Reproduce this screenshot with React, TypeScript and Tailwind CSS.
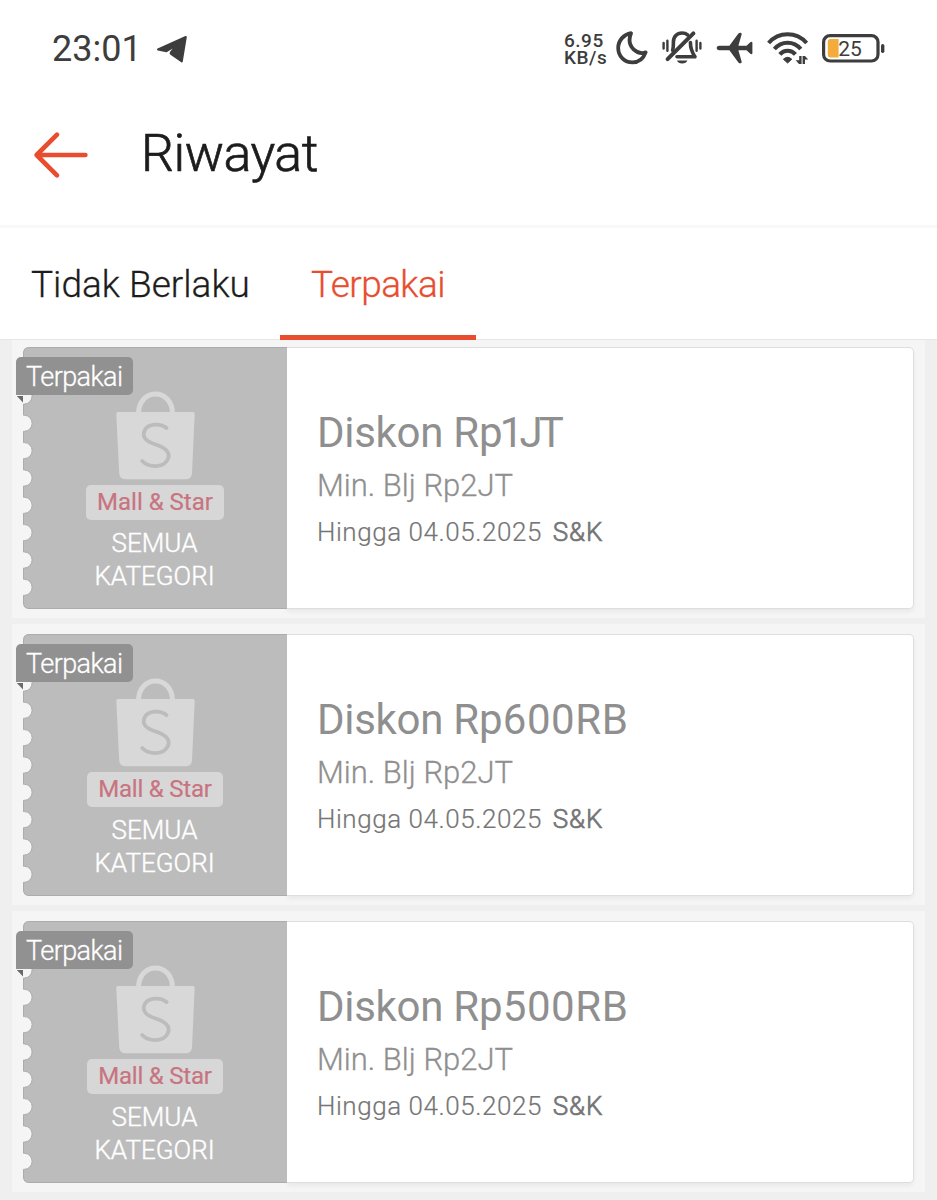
type Voucher = { amount: string; amountTracking: string; minimum: string; until: string; wide?: boolean };

const vouchers: Voucher[] = [
  { amount: "1JT", amountTracking: "tracking-[-3.8px] ml-[-3px]", minimum: "Min. Blj Rp2JT", until: "Hingga 04.05.2025", wide: true },
  { amount: "600RB", amountTracking: "tracking-[0.6px]", minimum: "Min. Blj Rp2JT", until: "Hingga 04.05.2025" },
  { amount: "500RB", amountTracking: "tracking-[0.6px]", minimum: "Min. Blj Rp2JT", until: "Hingga 04.05.2025" },
];

function TelegramIcon() {
  return (
    <svg width="32" height="28" viewBox="0 0 32 28" fill="#3d3d3d" stroke="#3d3d3d" strokeWidth="2" strokeLinejoin="round">
      <path d="M2 14.4 L29.8 2 L25.8 26.4 L15 19 Q14.2 18.2 15 17.2 L21.5 9.4 L10.5 16.2 Z" />
    </svg>
  );
}

function MoonIcon() {
  return (
    <svg width="32" height="34" viewBox="0 0 32 34" fill="none" stroke="#3d3d3d" strokeWidth="3.8" strokeLinecap="round" strokeLinejoin="round">
      <path d="M15 2.2 C8 3.4 2.2 9.2 2.2 17 C2.2 25.4 8.6 31.4 16.4 31.4 C22.4 31.4 27.4 27.6 29.6 21.4 C26 22.6 21.4 22 17.6 18.4 C13.4 14.2 12.4 8.6 15 2.2 Z" />
    </svg>
  );
}

function MutedBellIcon() {
  return (
    <svg width="40" height="36" viewBox="0 0 40 36" fill="none" stroke="#3d3d3d" strokeLinecap="round">
      <path d="M1.6 13V18.6M5.4 10.8V20.8M34.6 10.8V20.8M38.4 13V18.6" strokeWidth="2.4" />
      <path d="M10.6 20.4 C11.4 18 11.4 16 11.4 12 C11.4 6.4 15 3 20 3 C22.2 3 24.2 3.6 25.6 4.8" strokeWidth="3.6" />
      <path d="M28.4 12.6 C28.4 19 29.6 22 33 26.8 H15" strokeWidth="3.6" strokeLinejoin="round" />
      <path d="M5.6 29.2 L31.4 3.4" strokeWidth="4" />
      <path d="M15 30.6 H25.4 C24.4 34.6 16 34.6 15 30.6 Z" fill="#3d3d3d" stroke="none" />
    </svg>
  );
}

function PlaneIcon() {
  return (
    <svg width="37" height="32" viewBox="0 0 37 32" fill="#3d3d3d">
      <path d="M3 13.8 H13.4 L22.4 1.6 Q23.4 0.4 24.8 0.8 Q26 1.2 25.6 2.6 L22.4 13.8 H30.5 L34 10.4 Q36 9 36.4 10.8 V21.2 Q36 23 34 21.6 L30.5 18.2 H22.4 L25.6 29.4 Q26 30.8 24.8 31.2 Q23.4 31.6 22.4 30.4 L13.4 18.2 H3 Q0.6 18 0.6 16 Q0.6 14 3 13.8 Z" />
    </svg>
  );
}

function WifiIcon() {
  return (
    <svg width="42" height="33" viewBox="0 0 42 33" fill="none" stroke="#3d3d3d">
      <path d="M1.6 11 C11.8 -0.6 29.4 -0.6 39.6 11" strokeWidth="4" />
      <path d="M7.4 17 C14.4 8.6 26.8 8.6 33.8 17" strokeWidth="4" />
      <path d="M12.8 22.4 C17 17.4 24.2 17.4 28.4 22.4" strokeWidth="4" />
      <path d="M20.6 31 L16.4 27.2 Q20.6 23.4 24.8 27.2 Z" fill="#3d3d3d" strokeLinejoin="round" />
      <path d="M33.4 24V32M36.8 32V24" strokeWidth="2.4" />
      <path d="M33.4 32 H32 L28.6 28.2 H33.4 ZM36.8 24 H38 L41.2 27.6 H36.8 Z" fill="#3d3d3d" stroke="none" />
    </svg>
  );
}

function BatteryIcon() {
  return (
    <svg width="63" height="29" viewBox="0 0 63 29">
      <rect x="1.6" y="1.6" width="54.4" height="25.4" rx="6.5" fill="none" stroke="#3d3d3d" strokeWidth="3.2" />
      <path d="M8.5 5 H16.6 V23.5 H8.5 Q5.8 23.5 5.8 20.8 V7.7 Q5.8 5 8.5 5 Z" fill="#f3ab3c" />
      <rect x="59" y="10" width="3.4" height="9" rx="1.7" fill="#3d3d3d" />
      <text x="28" y="21.6" textAnchor="middle" fontFamily="Roboto, sans-serif" fontSize="21" fill="#3d3d3d" fontWeight="400">25</text>
    </svg>
  );
}

function BackIcon() {
  return (
    <svg width="56" height="48" viewBox="0 0 56 48" fill="none" stroke="#e84d2f" strokeWidth="4.6" strokeLinecap="round" strokeLinejoin="round">
      <path d="M24 3.6 L3.6 24 L24 44.4 M3.6 24 H52.4" />
    </svg>
  );
}

function BagIcon() {
  return (
    <svg width="79" height="89" viewBox="0 0 79 89" fill="none">
      <path d="M22.5 23 C22.5 -3.8 56.5 -3.8 56.5 23" stroke="#d8d8d8" strokeWidth="5" />
      <path d="M0.3 23 Q0.2 21 2 21 H77 Q78.8 21 78.7 23 L76 82.5 Q75.4 88.3 69.5 88.3 H9.5 Q3.8 88.3 3.2 82.5 Z" fill="#d8d8d8" />
      <path d="M50.5 37 C45 32.2 32 32 28.6 39.5 C25.4 47 31.5 50.6 39 53.2 C47.5 56 55.4 60.4 51.8 68.2 C47.4 77.4 32.6 76.6 26.2 70" stroke="#bcbcbc" strokeWidth="3.8" strokeLinecap="round" />
    </svg>
  );
}

const notches = [49, 76.3, 103.6, 131, 158.3, 185.6, 213, 240.3];
const edge =
  "M264.5 0.5 H6 Q0.5 0.5 0.5 6 " +
  notches.map((y) => `V${y - 8} H1.5 A7.6 8 0 0 1 1.5 ${y + 8} H0.5`).join(" ") +
  " V256 Q0.5 261.5 6 261.5 H264.5";

function StubShape() {
  return (
    <svg className="absolute left-0 top-0" width="264" height="262" viewBox="0 0 264 262">
      <path d={edge} fill="#bcbcbc" stroke="#acacac" strokeWidth="1" />
    </svg>
  );
}

function VoucherRow({ voucher, first }: { voucher: Voucher; first: boolean }) {
  return (
    <li className={`bg-[#f5f5f5] pl-[11px] pr-[11px] pb-[9px] ${first ? "pt-[7px]" : "pt-[10px]"}`}>
      <article className="relative flex h-[262px]">
        <div className="relative w-[264px] shrink-0">
          <StubShape />
          <div className="relative flex flex-col items-center pt-[44px]">
            <BagIcon />
            <div className={`mt-[5px] flex h-[35px] items-center justify-center rounded-[5px] bg-[#d7d7d7] text-[24px] leading-[33px] text-[#c87480] font-normal [-webkit-text-stroke:0.2px] ${voucher.wide ? "w-[138px]" : "w-[136px] tracking-[-0.2px]"}`}>
              Mall &amp; Star
            </div>
            <p className="mt-[6.5px] pr-[1px] text-center text-[26px] leading-[33px] font-light [-webkit-text-stroke:0.4px] text-white">
              SEMUA
              <br />
              KATEGORI
            </p>
          </div>
        </div>
        <div className="flex min-w-0 grow flex-col rounded-r-[5px] border border-l-0 border-[#dedede] bg-white pl-[30px] pt-[59px] shadow-[0_3px_4px_rgba(0,0,0,0.05)]">
          <h2 className="text-[42px] leading-[52px] font-normal text-[#8f8f8f]">
            <span className="tracking-[-0.3px]">Diskon </span>Rp
            <span className={voucher.amountTracking}>{voucher.amount}</span>
          </h2>
          <p className="text-[31px] leading-[53px] font-light [-webkit-text-stroke:0.3px] text-[#8f8f8f]">{voucher.minimum}</p>
          <p className="text-[26px] leading-[40px] font-light [-webkit-text-stroke:0.2px] text-[#757575]">
            <span className="tracking-[0.55px]">{voucher.until}</span>
            <span className="ml-[11px] tracking-[0.8px] [-webkit-text-stroke:0.7px]">S&amp;K</span>
          </p>
        </div>
        <div className="absolute left-[-7.5px] top-[10px]">
          <div className="h-[38px] w-[117.5px] rounded-[5px] rounded-bl-none bg-[#919191] text-center text-[27px] leading-[41px] font-light [-webkit-text-stroke:0.3px] tracking-[-0.6px] text-white">
            Terpakai
          </div>
          <svg width="7" height="8" viewBox="0 0 7 8" className="block">
            <path d="M0.8 1 H7 V7.4 Z" fill="#6a6a6a" />
          </svg>
        </div>
      </article>
    </li>
  );
}

export default function App() {
  return (
    <div className="h-[1200px] w-[937px] overflow-hidden bg-[#efefef] font-[Roboto,sans-serif]">
      <header className="bg-white">
        <div className="flex h-[96px] items-center justify-between pl-[52px] pr-[52px]">
          <div className="flex items-center gap-[14px] pt-[2px]">
            <span className="text-[36px] leading-[40px] text-[#3d3d3d]">23:01</span>
            <TelegramIcon />
          </div>
          <div className="flex items-center text-[#3d3d3d]">
            <div className="w-[52px] pt-[1px] text-[19px] leading-[17px] font-medium tracking-[0.5px]">
              <div>6.95</div>
              <div>KB/s</div>
            </div>
            <MoonIcon />
            <div className="ml-[14px]"><MutedBellIcon /></div>
            <div className="ml-[14px]"><PlaneIcon /></div>
            <div className="ml-[14px]"><WifiIcon /></div>
            <div className="ml-[13px]"><BatteryIcon /></div>
          </div>
        </div>
        <div className="flex h-[129px] items-start pl-[33px]">
          <div className="mt-[35px]"><BackIcon /></div>
          <h1 className="ml-[52px] mt-[28px] text-[52px] leading-[60px] font-light [-webkit-text-stroke:0.7px] tracking-[-0.5px] text-[#1c1c1c]">Riwayat</h1>
        </div>
        <nav className="flex h-[115px] border-b border-t-[3px] border-b-[#e6e6e6] border-t-[#f8f8f8] text-[37px] leading-[114px] font-light [-webkit-text-stroke:0.3px]">
          <div className="w-[280px] pl-[31px] text-[#1c1c1c]">Tidak Berlaku</div>
          <div className="relative w-[196px] text-center tracking-[-0.6px] text-[#e84d2f]">
            Terpakai
            <span className="absolute bottom-[-1px] left-0 h-[5px] w-full bg-[#e84d2f]" />
          </div>
        </nav>
      </header>
      <ul className="mx-[12px] flex flex-col gap-[6px]">
        {vouchers.map((voucher, i) => (
          <VoucherRow key={voucher.amount} voucher={voucher} first={i === 0} />
        ))}
      </ul>
    </div>
  );
}
